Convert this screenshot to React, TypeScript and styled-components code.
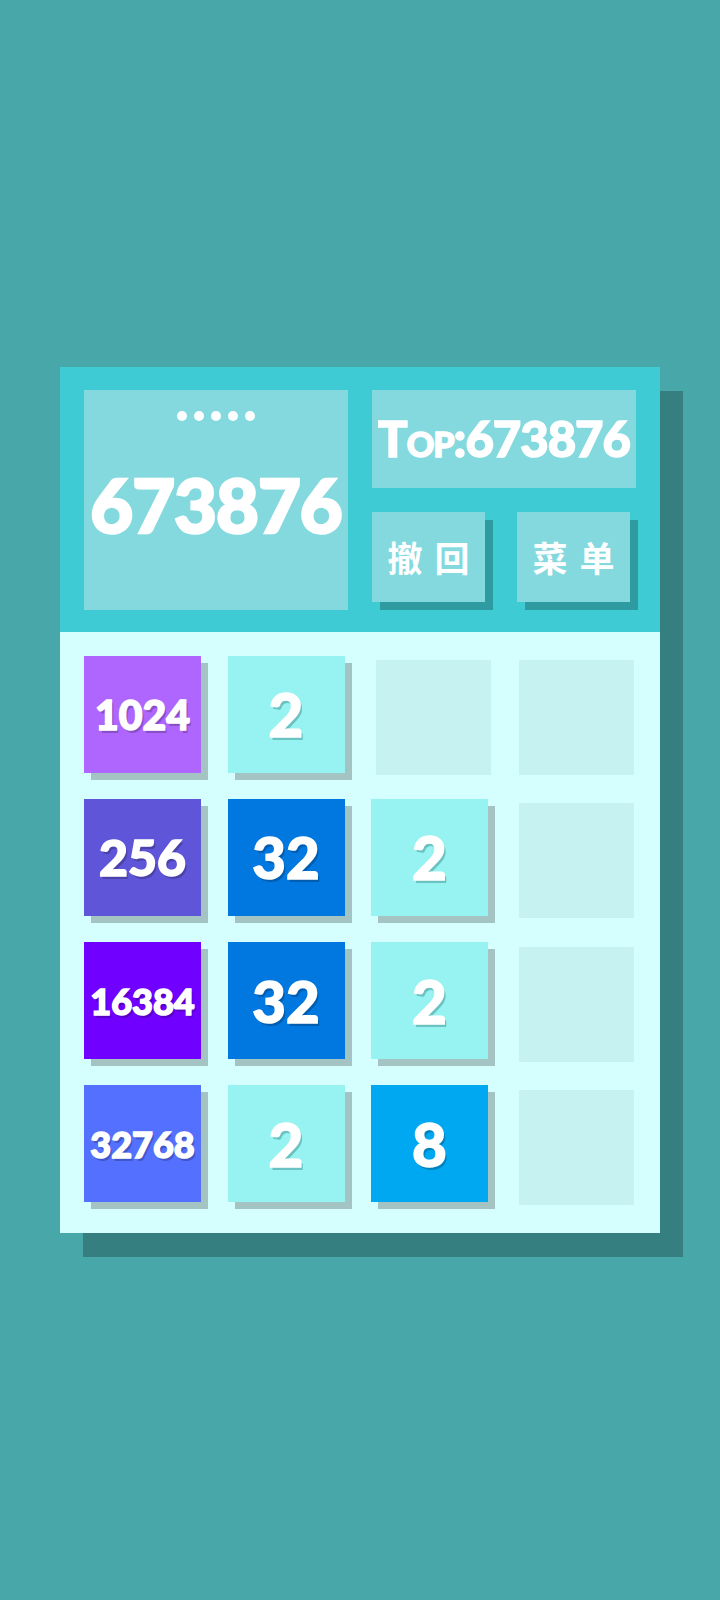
import styled, { createGlobalStyle, css } from 'styled-components';

const GlobalStyle = createGlobalStyle`
  * {
    box-sizing: border-box;
  }

  body {
    margin: 0;
    background: #48a7a8;
    font-family: Lato, "Noto Sans", "Noto Sans CJK SC", sans-serif;
  }
`;

const Page = styled.main`
  display: flex;
  justify-content: center;
  align-items: center;
  min-height: 1600px;
`;

const Panel = styled.section`
  width: 600px;
  display: flex;
  flex-direction: column;
  box-shadow: 23px 24px 0 #367f80;
`;

const Header = styled.header`
  display: grid;
  grid-template-columns: 264px 264px;
  gap: 24px;
  height: 265px;
  padding: 23px 24px 22px;
  background: #3fcbd3;
`;

const ScoreBox = styled.div`
  position: relative;
  display: flex;
  justify-content: center;
  align-items: center;
  padding-top: 10px;
  background: #83d9de;
`;

const Dots = styled.div`
  position: absolute;
  top: 21px;
  left: 0;
  right: 0;
  display: flex;
  justify-content: center;
  gap: 7px;

  span {
    width: 10px;
    height: 10px;
    border-radius: 50%;
    background: #fff;
  }
`;

const Score = styled.span`
  font-size: 74px;
  font-weight: 900;
  letter-spacing: -1px;
  color: #fff;
  line-height: 1;
  -webkit-text-stroke: 2.5px #fff;
`;

const SideColumn = styled.div`
  display: flex;
  flex-direction: column;
  gap: 24px;
`;

const BestBox = styled.div`
  display: flex;
  justify-content: center;
  align-items: center;
  height: 98px;
  background: #83d9de;
  font-size: 49px;
  font-weight: 900;
  letter-spacing: -1px;
  color: #fff;
  line-height: 1;
  -webkit-text-stroke: 1.5px #fff;

  small {
    font-size: inherit;
    font-variant: small-caps;
  }
`;

const ButtonRow = styled.div`
  display: flex;
  gap: 32px;
`;

const Button = styled.button`
  width: 113px;
  height: 90px;
  padding: 0 0 0 12px;
  border: none;
  background: #83d9de;
  box-shadow: 8px 8px 0 #2e9ba0;
  font-family: "Noto Sans CJK SC", sans-serif;
  font-size: 35px;
  font-weight: 700;
  letter-spacing: 12px;
  color: #fff;
  cursor: pointer;
`;

const Board = styled.div`
  display: grid;
  grid-template-columns: repeat(4, 124px);
  grid-auto-rows: 124px;
  column-gap: 19.5px;
  row-gap: 19.3px;
  padding: 24px 21px 24px 24px;
  background: #d5fefe;
`;

const TILE_COLORS: Record<number, string> = {
  2: '#96f3f2',
  8: '#00a8f2',
  32: '#0078e0',
  256: '#5f55d9',
  1024: '#af66ff',
  16384: '#7000ff',
  32768: '#5470ff',
};

// font size by digit count
const FONT_SIZES = [60, 60, 58, 50, 41, 36];

type TileProps = {
  $value: number;
};

const Tile = styled.div<TileProps>`
  display: flex;
  justify-content: center;
  align-items: center;
  width: 117px;
  height: 117px;
  background: ${({ $value }) => TILE_COLORS[$value] ?? '#96f3f2'};
  box-shadow: 7px 7px 0 #a4c3c3;
  font-weight: 900;
  font-size: ${({ $value }) => FONT_SIZES[String($value).length]}px;
  color: #fff;
  line-height: 1;
  -webkit-text-stroke: 1.5px #fff;
  text-shadow: 2px 3px 0 rgba(0, 0, 0, 0.22);

  ${({ $value }) => $value === 2 && css`
    text-shadow: 2px 3px 0 rgba(40, 120, 120, 0.4);
  `}
`;

const EmptyCell = styled.div`
  place-self: center;
  width: 115px;
  height: 115px;
  background: #c6f3f2;
`;

const board = [
  [1024, 2, 0, 0],
  [256, 32, 2, 0],
  [16384, 32, 2, 0],
  [32768, 2, 8, 0],
];

export default function App() {
  return (
    <Page>
      <GlobalStyle />
      <Panel>
        <Header>
          <ScoreBox>
            <Dots>
              {[0, 1, 2, 3, 4].map((i) => <span key={i} />)}
            </Dots>
            <Score>673876</Score>
          </ScoreBox>
          <SideColumn>
            <BestBox>
              T<small>op</small>:673876
            </BestBox>
            <ButtonRow>
              <Button>撤回</Button>
              <Button>菜单</Button>
            </ButtonRow>
          </SideColumn>
        </Header>
        <Board>
          {board.flatMap((row, r) => row.map((value, c) => (
            value
              ? <Tile key={`${r}-${c}`} $value={value}>{value}</Tile>
              : <EmptyCell key={`${r}-${c}`} />
          )))}
        </Board>
      </Panel>
    </Page>
  );
}
